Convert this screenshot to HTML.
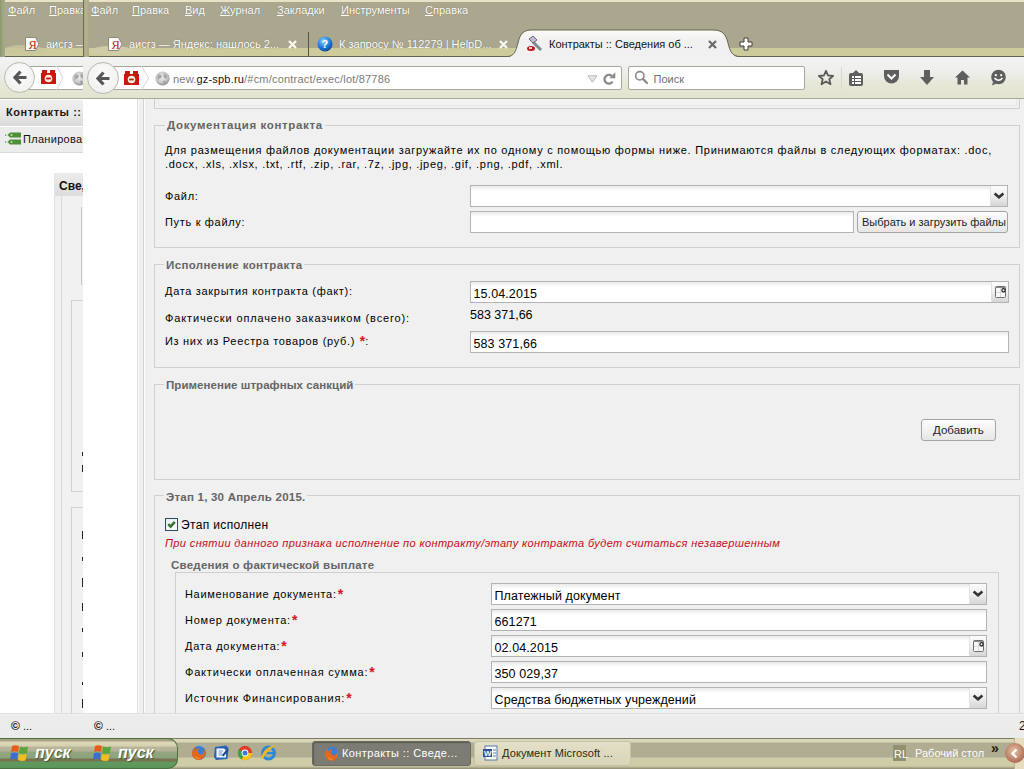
<!DOCTYPE html>
<html><head><meta charset="utf-8">
<style>
*{margin:0;padding:0;box-sizing:border-box}
html,body{width:1024px;height:769px;overflow:hidden;background:#fff;font-family:"Liberation Sans",sans-serif;font-size:11px;color:#000}
.a{position:absolute}
.t{position:absolute;white-space:nowrap;line-height:1}
.m{color:#fff;font-size:11px;text-shadow:0 0 1px rgba(60,60,40,.6)}
.m u{text-decoration:underline}
.lab{position:absolute;white-space:nowrap;font-size:11px;letter-spacing:.68px;line-height:1;color:#000}
.leg{position:absolute;white-space:nowrap;font-size:11.5px;font-weight:bold;letter-spacing:.3px;line-height:1;color:#656565;background:#f0f0f0;padding:0 2px}
.fs{position:absolute;border:1px solid #cfcfcf;background:#f0f0f0}
.inp{position:absolute;height:22px;border:1px solid #b3b3b3;background:linear-gradient(#e9e9e9 0,#f7f7f7 3px,#fff 5px,#fff 100%)}
.inp span{position:absolute;left:2.5px;top:6px;font-size:12.5px;line-height:1;white-space:nowrap;letter-spacing:.1px}
.sel{position:absolute;right:0;top:0;width:17px;height:20px;border-left:1px solid #e2e2e2;background:linear-gradient(#fbfbfb 0,#f1f1f1 45%,#d6d6d6 100%)}
.btn{position:absolute;height:22px;border:1px solid #a4a4a4;border-radius:3px;background:linear-gradient(#fdfdfd,#e6e6e6);text-align:center;white-space:nowrap}
.req{color:#d8141c;font-weight:bold;font-size:14px;line-height:0;position:relative;top:1px;margin-left:1px;letter-spacing:0}
</style></head><body>


<!-- ============ TOP CHROME ============ -->
<div class="a" style="left:0;top:0;width:1024px;height:58px;background:#aba78e"></div>
<div class="a" style="left:0;top:0;width:1024px;height:2px;background:#e7e1c6"></div>
<!-- tab strip bottom band -->
<div class="a" style="left:0;top:48px;width:1024px;height:9px;background:#cdca9c"></div>
<div class="a" style="left:0;top:56px;width:1024px;height:1px;background:#66644f"></div>
<!-- persona blobs -->
<div class="a" style="left:4px;top:45px;width:40px;height:10px;border-radius:50%;background:#c9c69e;opacity:.8"></div>
<div class="a" style="left:88px;top:45px;width:40px;height:10px;border-radius:50%;background:#c9c69e;opacity:.8"></div>
<!-- back window left edge stripe -->
<div class="a" style="left:0;top:0;width:5px;height:57px;background:linear-gradient(90deg,#87986a,#9aa47c 40%,#aba78e)"></div>

<!-- back window menu -->
<div class="t m" style="left:8px;top:5px"><u>Ф</u>айл</div>
<div class="t m" style="left:49px;top:5px"><u>П</u>равка</div>
<!-- back window tab -->
<svg class="a" style="left:25px;top:37px" width="15" height="14" viewBox="0 0 15 14"><path d="M0.5 0.5 H10.5 L14 7 L10.5 13.5 H0.5 Z" fill="#fbfbfb" stroke="#8a8a7a"/><text x="3.6" y="11.6" font-family="Liberation Serif" font-size="12.5" fill="#b52a1c">Я</text></svg>
<div class="t m" style="left:46px;top:39px">аисгз —</div>

<!-- front window -->
<div class="a" style="left:83px;top:0;width:941px;height:58px;background:#aba78e"></div>
<div class="a" style="left:83px;top:0;width:941px;height:2px;background:#e7e1c6"></div>
<div class="a" style="left:83px;top:48px;width:941px;height:8px;background:#cdca9c"></div>
<div class="a" style="left:83px;top:56px;width:941px;height:1px;background:#66644f"></div>
<div class="a" style="left:90px;top:46px;width:44px;height:10px;border-radius:50%;background:#cfcca6"></div>
<div class="a" style="left:83px;top:0;width:6px;height:57px;background:linear-gradient(90deg,#6e6b52 0,#6e6b52 1px,#a9ab82 1px,#b3b48c 3px,#aba78e 6px)"></div>

<div class="t m" style="left:91px;top:5px"><u>Ф</u>айл</div>
<div class="t m" style="left:132px;top:5px"><u>П</u>равка</div>
<div class="t m" style="left:185px;top:5px"><u>В</u>ид</div>
<div class="t m" style="left:220px;top:5px"><u>Ж</u>урнал</div>
<div class="t m" style="left:277px;top:5px"><u>З</u>акладки</div>
<div class="t m" style="left:341px;top:5px"><u>И</u>нструменты</div>
<div class="t m" style="left:425px;top:5px"><u>С</u>правка</div>

<!-- tab 1 -->
<svg class="a" style="left:108px;top:37px" width="15" height="14" viewBox="0 0 15 14"><path d="M0.5 0.5 H10.5 L14 7 L10.5 13.5 H0.5 Z" fill="#fbfbfb" stroke="#8a8a7a"/><text x="3.6" y="11.6" font-family="Liberation Serif" font-size="12.5" fill="#b52a1c">Я</text></svg>
<div class="t m" style="left:129px;top:39px">аисгз — Яндекс: нашлось 2...</div>
<svg class="a" style="left:288px;top:40px" width="9" height="9" viewBox="0 0 9 9"><path d="M1 1 L8 8 M8 1 L1 8" stroke="#fafaf0" stroke-width="2.2"/></svg>
<div class="a" style="left:308px;top:32px;width:1px;height:24px;background:#55533f"></div>
<!-- tab 2 -->
<svg class="a" style="left:317px;top:36px" width="16" height="16" viewBox="0 0 16 16"><defs><radialGradient id="qg" cx="40%" cy="30%" r="70%"><stop offset="0" stop-color="#8fd0ff"/><stop offset=".6" stop-color="#1f7fd8"/><stop offset="1" stop-color="#0b4e9a"/></radialGradient></defs><circle cx="8" cy="8" r="7.5" fill="url(#qg)"/><text x="4.6" y="12.2" font-family="Liberation Sans" font-weight="bold" font-size="11" fill="#fff">?</text></svg>
<div class="t m" style="left:339px;top:39px">К запросу № 112279 | HelpD...</div>
<svg class="a" style="left:499px;top:40px" width="9" height="9" viewBox="0 0 9 9"><path d="M1 1 L8 8 M8 1 L1 8" stroke="#fafaf0" stroke-width="2.2"/></svg>
<!-- active tab -->
<svg class="a" style="left:500px;top:29px" width="250" height="29" viewBox="0 0 250 29"><defs><linearGradient id="tg" x1="0" y1="0" x2="0" y2="1"><stop offset="0" stop-color="#fbfbf8"/><stop offset=".35" stop-color="#f1f1f1"/><stop offset="1" stop-color="#f0f0f0"/></linearGradient></defs><path d="M0 28 H7 C14 28 16 22 18 14 C20 5 23 1 32 1 H213 C222 1 226 5 228 14 C230 22 232 28 240 28 H250 V29 H0 Z" fill="url(#tg)"/><path d="M0 27.5 H7 C14 27.5 16 22 18 14 C20 5 23 1 32 1 H213 C222 1 226 5 228 14 C230 22 232 27.5 240 27.5 H250" fill="none" stroke="#66644f" stroke-width="1"/></svg>
<svg class="a" style="left:526px;top:35px" width="18" height="18" viewBox="0 0 18 18"><path d="M7 7 L15 15" stroke="#7f8c8d" stroke-width="3"/><path d="M3 4 L7 1 L11 5 L7 8 Z" fill="#c9b7cf" stroke="#6b6b78" stroke-width="1"/><ellipse cx="5" cy="13.5" rx="4" ry="2.5" fill="#c4171d"/><rect x="3" y="12" width="3" height="2" fill="#f6d2d2"/></svg>
<div class="t" style="left:549px;top:39px;font-size:11px;color:#111">Контракты :: Сведения об ...</div>
<svg class="a" style="left:708px;top:40px" width="9" height="9" viewBox="0 0 9 9"><path d="M1 1 L8 8 M8 1 L1 8" stroke="#6a6a6a" stroke-width="2.2"/></svg>
<svg class="a" style="left:739px;top:37px" width="14" height="14" viewBox="0 0 14 14"><path d="M5 1 H9 V5 H13 V9 H9 V13 H5 V9 H1 V5 H5 Z" fill="#fff" stroke="#3f3f35" stroke-width="1"/></svg>

<!-- ============ NAV BAR ============ -->
<div class="a" style="left:0;top:57px;width:1024px;height:42px;background:linear-gradient(#f3f3f3 0,#efefed 30%,#e5e6d4 70%,#e2e3cf 100%)"></div>
<div class="a" style="left:0;top:98px;width:1024px;height:1px;background:#a9a996"></div>
<!-- back window nav -->
<div class="a" style="left:20px;top:66px;width:70px;height:24px;border:1px solid #a7a7a0;border-radius:0 2px 2px 0;background:#fff"></div>
<div class="a" style="left:4px;top:62px;width:31px;height:31px;border-radius:50%;border:1px solid #b9b9b2;background:radial-gradient(circle at 50% 40%,#fdfdfd,#ececea)"></div>
<svg class="a" style="left:13px;top:70px" width="14" height="15" viewBox="0 0 14 15"><path d="M7.5 1.5 L2 7.5 L7.5 13.5 M2.5 7.5 H13.5" fill="none" stroke="#585858" stroke-width="3.2"/></svg>
<svg class="a" style="left:41px;top:70px" width="15" height="14" viewBox="0 0 15 14"><rect x="0" y="3" width="15" height="11" fill="#c8180f"/><rect x="1" y="0" width="5" height="4" fill="#c8180f"/><rect x="9" y="0" width="5" height="4" fill="#c8180f"/><circle cx="7.5" cy="8.5" r="3.8" fill="#fbeede"/><rect x="5.2" y="7.6" width="4.6" height="1.8" fill="#c8180f"/></svg>
<svg class="a" style="left:56px;top:66px" width="8" height="24" viewBox="0 0 8 24"><path d="M0.5 0 L7 12 L0.5 24" fill="none" stroke="#cfd6dd" stroke-width="1"/></svg>
<svg class="a" style="left:72px;top:71px" width="15" height="15" viewBox="0 0 15 15"><defs><radialGradient id="gl2" cx="45%" cy="40%" r="60%"><stop offset="0" stop-color="#f4f4f4"/><stop offset=".7" stop-color="#c2c2c2"/><stop offset="1" stop-color="#8e8e8e"/></radialGradient></defs><circle cx="7.5" cy="7.5" r="7" fill="url(#gl2)"/><path d="M3 4 C5 3 7 4 7 6 C6 8 4 7 3.5 9 C2.5 8 2 6 3 4 Z M9 2.5 C11 3 12.5 5 12 7 C11 8 10 6.5 9 7 C8.5 5.5 8 4 9 2.5 Z M8 10 C10 9.5 11.5 10.5 10.5 12.5 C9 13 8 12 8 10 Z" fill="#9a9a9a" opacity=".8"/></svg>
<!-- front window nav -->
<div class="a" style="left:83px;top:57px;width:941px;height:42px;background:linear-gradient(#f3f3f3 0,#efefed 30%,#e5e6d4 70%,#e2e3cf 100%)"></div>
<div class="a" style="left:83px;top:98px;width:941px;height:1px;background:#a9a996"></div>
<div class="a" style="left:103px;top:66px;width:519px;height:24px;border:1px solid #a7a7a0;border-radius:0 2px 2px 0;background:#fff"></div>
<div class="a" style="left:87px;top:62px;width:32px;height:32px;border-radius:50%;border:1px solid #b9b9b2;background:radial-gradient(circle at 50% 40%,#fdfdfd,#ececea)"></div>
<svg class="a" style="left:96px;top:71px" width="14" height="15" viewBox="0 0 14 15"><path d="M7.5 1.5 L2 7.5 L7.5 13.5 M2.5 7.5 H13.5" fill="none" stroke="#585858" stroke-width="3.2"/></svg>
<svg class="a" style="left:124px;top:71px" width="15" height="14" viewBox="0 0 15 14"><rect x="0" y="3" width="15" height="11" fill="#c8180f"/><rect x="1" y="0" width="5" height="4" fill="#c8180f"/><rect x="9" y="0" width="5" height="4" fill="#c8180f"/><circle cx="7.5" cy="8.5" r="3.8" fill="#fbeede"/><rect x="5.2" y="7.6" width="4.6" height="1.8" fill="#c8180f"/></svg>
<svg class="a" style="left:141px;top:66px" width="9" height="24" viewBox="0 0 9 24"><path d="M0.5 0 L7.5 12 L0.5 24" fill="none" stroke="#cfd6dd" stroke-width="1"/></svg>
<svg class="a" style="left:155px;top:71px" width="15" height="15" viewBox="0 0 15 15"><defs><radialGradient id="gl1" cx="45%" cy="40%" r="60%"><stop offset="0" stop-color="#f4f4f4"/><stop offset=".7" stop-color="#c2c2c2"/><stop offset="1" stop-color="#8e8e8e"/></radialGradient></defs><circle cx="7.5" cy="7.5" r="7" fill="url(#gl1)"/><path d="M3 4 C5 3 7 4 7 6 C6 8 4 7 3.5 9 C2.5 8 2 6 3 4 Z M9 2.5 C11 3 12.5 5 12 7 C11 8 10 6.5 9 7 C8.5 5.5 8 4 9 2.5 Z M8 10 C10 9.5 11.5 10.5 10.5 12.5 C9 13 8 12 8 10 Z" fill="#9a9a9a" opacity=".8"/></svg>
<div class="t" style="left:173px;top:74px;font-size:11px;letter-spacing:.2px;color:#7a7a7a">new.<span style="color:#111">gz-spb.ru</span>/#cm/contract/exec/lot/87786</div>
<svg class="a" style="left:587px;top:75px" width="11" height="8" viewBox="0 0 11 8"><path d="M1 0.8 H10 L5.5 7.2 Z" fill="#e6e6e6" stroke="#b8b8b8"/></svg>
<svg class="a" style="left:601px;top:71px" width="16" height="15" viewBox="0 0 16 15"><path d="M10.9 5 A4.4 4.4 0 1 0 11.6 10.6" fill="none" stroke="#8a8a8a" stroke-width="2.3"/><path d="M14.3 1.2 L14.3 7.2 L8.4 7.2 Z" fill="#8a8a8a"/></svg>
<div class="a" style="left:628px;top:66px;width:177px;height:24px;border:1px solid #a7a7a0;border-radius:2px;background:#fff"></div>
<svg class="a" style="left:634px;top:70px" width="15" height="15" viewBox="0 0 15 15"><circle cx="5.8" cy="5.8" r="4.2" fill="none" stroke="#8a8a8a" stroke-width="1.6"/><path d="M8.8 8.8 L13 13" stroke="#8a8a8a" stroke-width="2.2" stroke-linecap="round"/></svg>
<div class="t" style="left:653.5px;top:74px;font-size:11px;color:#707070">Поиск</div>
<!-- toolbar icons -->
<svg class="a" style="left:817px;top:69px" width="18" height="18" viewBox="0 0 18 18"><path d="M9 1.8 L11.1 6.5 L16.2 6.9 L12.3 10.2 L13.5 15.2 L9 12.5 L4.5 15.2 L5.7 10.2 L1.8 6.9 L6.9 6.5 Z" fill="none" stroke="#5a5a5a" stroke-width="1.8" stroke-linejoin="round"/></svg>
<div class="a" style="left:841px;top:67px;width:1px;height:22px;background:#d8d8cc"></div>
<svg class="a" style="left:848px;top:69px" width="16" height="18" viewBox="0 0 16 18"><rect x="1" y="4" width="14" height="13" rx="2" fill="#5e5e5e"/><path d="M5 4 L8 1 L11 4 Z" fill="#5e5e5e"/><rect x="4" y="7" width="2" height="2" fill="#fff"/><rect x="7" y="7" width="6" height="2" fill="#fff"/><rect x="4" y="10" width="2" height="2" fill="#fff"/><rect x="7" y="10" width="6" height="2" fill="#fff"/><rect x="4" y="13" width="2" height="2" fill="#fff"/><rect x="7" y="13" width="6" height="2" fill="#fff"/></svg>
<svg class="a" style="left:883px;top:69px" width="17" height="16" viewBox="0 0 17 16"><path d="M1 1 H16 V7 A7.5 7.5 0 0 1 1 7 Z" fill="#5e5e5e"/><path d="M4.5 5.5 L8.5 9.5 L12.5 5.5" fill="none" stroke="#fff" stroke-width="2"/></svg>
<svg class="a" style="left:919px;top:69px" width="16" height="17" viewBox="0 0 16 17"><rect x="5" y="1" width="6" height="8" fill="#5e5e5e"/><path d="M1 8 H15 L8 16 Z" fill="#5e5e5e"/></svg>
<svg class="a" style="left:954px;top:69px" width="17" height="17" viewBox="0 0 17 17"><path d="M8.5 1.5 L16 8.5 H13.5 V15.5 H10 V11 H7 V15.5 H3.5 V8.5 H1 Z" fill="#5e5e5e"/></svg>
<svg class="a" style="left:990px;top:69px" width="17" height="17" viewBox="0 0 17 17"><circle cx="8.5" cy="8" r="7.3" fill="#5e5e5e"/><path d="M3 13 L2 16.5 L6.5 14.5 Z" fill="#5e5e5e"/><circle cx="5.8" cy="6.2" r="1.1" fill="#fff"/><circle cx="11.2" cy="6.2" r="1.1" fill="#fff"/><path d="M4.5 9 Q8.5 13.5 12.5 9" fill="none" stroke="#fff" stroke-width="1.6"/></svg>


<!-- ============ BACK WINDOW CONTENT ============ -->
<div class="a" style="left:0;top:99px;width:83px;height:614px;background:#fff"></div>
<div class="a" style="left:0;top:100px;width:83px;height:26px;background:linear-gradient(#efefef,#e6e6e6 60%,#dadada)"></div>
<div class="t" style="left:6px;top:107px;font-size:11px;font-weight:bold;letter-spacing:.55px;color:#1a1a1a">Контракты ::</div>
<div class="a" style="left:0;top:127px;width:83px;height:26px;background:#ececec;border-bottom:1px solid #dcdcdc"></div>
<svg class="a" style="left:4px;top:131px" width="18" height="16" viewBox="0 0 18 16"><path d="M6 1.5 H17 V6.5 H6 L3.5 4 Z" fill="#4f8f38"/><path d="M6 8.5 H17 V13.5 H6 L3.5 11 Z" fill="#4f8f38"/><circle cx="7.5" cy="4" r="1" fill="#bfe3a8"/><circle cx="7.5" cy="11" r="1" fill="#bfe3a8"/><rect x="1" y="3.5" width="1.3" height="1.3" fill="#5a86a8"/><rect x="1" y="10.5" width="1.3" height="1.3" fill="#5a86a8"/></svg>
<div class="t" style="left:23px;top:134px;font-size:11px;letter-spacing:.3px;color:#111">Планирован</div>
<div class="a" style="left:54px;top:173px;width:29px;height:540px;background:#f1f1f1;border-left:1px solid #e2e2e2"></div>
<div class="a" style="left:54px;top:173px;width:29px;height:23px;background:linear-gradient(#ececec,#dcdcdc);border-left:1px solid #e6e6e6"></div>
<div class="t" style="left:59px;top:180px;font-size:12px;font-weight:bold;color:#111">Све,</div>
<div class="a" style="left:61px;top:196px;width:1px;height:517px;background:#dadada"></div>
<div class="a" style="left:81px;top:207px;width:1px;height:78px;background:#c8c8c8"></div>
<div class="a" style="left:71px;top:300px;width:12px;height:192px;border:1px solid #d0d0d0;border-right:0"></div>
<div class="a" style="left:71px;top:507px;width:12px;height:220px;border:1px solid #d0d0d0;border-right:0"></div>
<div class="a" style="left:82px;top:452px;width:1px;height:4px;background:#222"></div>
<div class="a" style="left:82px;top:465px;width:1px;height:7px;background:#222"></div>
<div class="a" style="left:82px;top:531px;width:1px;height:8px;background:#222"></div>
<div class="a" style="left:82px;top:557px;width:1px;height:4px;background:#222"></div>
<div class="a" style="left:82px;top:578px;width:1px;height:9px;background:#222"></div>
<div class="a" style="left:82px;top:603px;width:1px;height:8px;background:#222"></div>
<div class="a" style="left:82px;top:628px;width:1px;height:4px;background:#222"></div>
<div class="a" style="left:82px;top:652px;width:1px;height:5px;background:#222"></div>
<div class="a" style="left:82px;top:682px;width:1px;height:3px;background:#222"></div>
<div class="a" style="left:82px;top:699px;width:1px;height:9px;background:#222"></div>

<!-- ============ CONTENT ============ -->
<div class="a" style="left:83px;top:99px;width:941px;height:614px;background:#f0f0f0"></div>
<div class="a" style="left:83px;top:99px;width:54px;height:614px;background:#fff"></div>
<div class="a" style="left:137px;top:99px;width:1px;height:614px;background:#e0e0e0"></div>
<div class="a" style="left:138px;top:99px;width:1px;height:614px;background:#fafafa"></div>
<div class="a" style="left:143px;top:99px;width:1px;height:614px;background:#d4d4d4"></div>
<div class="a" style="left:144px;top:99px;width:1px;height:614px;background:#fcfcfc"></div>

<!-- previous fieldset (cut) -->
<div class="fs" style="left:154px;top:99px;width:866px;height:10px;border-top:0"></div>
<div class="a" style="left:158px;top:99px;width:859px;height:7px;border:1px solid #e8e8e8;border-top:0;background:#f3f3f3"></div>

<!-- Документация контракта -->
<div class="fs" style="left:154px;top:125px;width:866px;height:123px"></div>
<div class="leg" style="left:165px;top:120px;letter-spacing:0.64px">Документация контракта</div>
<div class="lab" style="left:165px;top:144.7px;letter-spacing:.728px">Для размещения файлов документации загружайте их по одному с помощью формы ниже. Принимаются файлы в следующих форматах: .doc,</div>
<div class="lab" style="left:165px;top:158.7px;letter-spacing:.70px">.docx, .xls, .xlsx, .txt, .rtf, .zip, .rar, .7z, .jpg, .jpeg, .gif, .png, .pdf, .xml.</div>
<div class="lab" style="left:165px;top:190.7px">Файл:</div>
<div class="lab" style="left:165px;top:216.8px">Путь к файлу:</div>
<div class="inp" style="left:470px;top:185px;width:538px"><div class="sel"><svg width="17" height="20" viewBox="0 0 17 20"><path d="M3.6 7.4 L8 11.2 L12.4 7.4" fill="none" stroke="#333" stroke-width="2.6"/></svg></div></div>
<div class="inp" style="left:470px;top:211px;width:384px"></div>
<div class="btn" style="left:857px;top:211px;width:151px"><span class="t" style="left:4px;top:5px;font-size:11px;color:#222">Выбрать и загрузить файлы</span></div>

<!-- Исполнение контракта -->
<div class="fs" style="left:154px;top:264px;width:866px;height:104px"></div>
<div class="leg" style="left:164px;top:259.6px;letter-spacing:0.37px">Исполнение контракта</div>
<div class="lab" style="left:165px;top:286.4px">Дата закрытия контракта (факт):</div>
<div class="lab" style="left:165px;top:312.6px;letter-spacing:.86px">Фактически оплачено заказчиком (всего):</div>
<div class="lab" style="left:165px;top:336.2px">Из них из Реестра товаров (руб.) <span class="req">*</span>:</div>
<div class="inp" style="left:470px;top:281px;width:539px"><span>15.04.2015</span><div class="sel"><svg width="17" height="20" viewBox="0 0 17 20"><rect x="3.5" y="4.5" width="10" height="11" rx="1" fill="#f8f8f8" stroke="#6e6e6e" stroke-width="1"/><line x1="3.5" y1="5.5" x2="13.5" y2="5.5" stroke="#8a8a8a"/><line x1="4" y1="10.5" x2="13" y2="10.5" stroke="#dadada"/><line x1="8.5" y1="6" x2="8.5" y2="15" stroke="#dadada"/><circle cx="11.5" cy="8.3" r="1.6" fill="#fff" stroke="#222" stroke-width="1.2"/></svg></div></div>
<div class="t" style="left:470px;top:309.1px;font-size:12.5px">583 371,66</div>
<div class="inp" style="left:470px;top:331px;width:539px"><span>583 371,66</span></div>

<!-- Применение штрафных санкций -->
<div class="fs" style="left:154px;top:384px;width:866px;height:96px"></div>
<div class="leg" style="left:164px;top:379.8px;letter-spacing:0.05px">Применение штрафных санкций</div>
<div class="btn" style="left:921px;top:419px;width:75px"><span class="t" style="left:11px;top:5px;font-size:11.5px;color:#222">Добавить</span></div>

<!-- Этап 1 -->
<div class="fs" style="left:154px;top:495px;width:866px;height:260px"></div>
<div class="leg" style="left:164px;top:491.7px;letter-spacing:0.23px">Этап 1, 30 Апрель 2015.</div>
<div class="a" style="left:165px;top:518px;width:13px;height:13px;border:1px solid #2b4b5c;background:linear-gradient(135deg,#e4eef0,#fff)"><svg width="11" height="11" viewBox="0 0 11 11" style="position:absolute;left:0;top:0"><path d="M2.3 5.2 L4.6 7.6 L8.8 2.8" fill="none" stroke="#3b7534" stroke-width="2.6"/></svg></div>
<div class="lab" style="left:181px;top:518.6px;font-size:12px;letter-spacing:.35px">Этап исполнен</div>
<div class="lab" style="left:165px;top:538px;font-style:italic;color:#c80a16;letter-spacing:.38px">При снятии данного признака исполнение по контракту/этапу контракта будет считаться незавершенным</div>
<div class="leg" style="left:169px;top:560.4px;background:none;letter-spacing:0.24px">Сведения о фактической выплате</div>
<div class="a" style="left:175px;top:572px;width:824px;height:200px;border:1px solid #cfcfcf;border-bottom:0"></div>
<div class="lab" style="left:185px;top:589.2px">Наименование документа:<span class="req">*</span></div>
<div class="lab" style="left:185px;top:615.2px;letter-spacing:0.770px">Номер документа:<span class="req">*</span></div>
<div class="lab" style="left:185px;top:641.2px;letter-spacing:0.750px">Дата документа:<span class="req">*</span></div>
<div class="lab" style="left:185px;top:667.2px;letter-spacing:0.810px">Фактически оплаченная сумма:<span class="req">*</span></div>
<div class="lab" style="left:185px;top:693.2px;letter-spacing:0.855px">Источник Финансирования:<span class="req">*</span></div>
<div class="inp" style="left:491px;top:583px;width:496px"><span>Платежный документ</span><div class="sel"><svg width="17" height="20" viewBox="0 0 17 20"><path d="M3.6 7.4 L8 11.2 L12.4 7.4" fill="none" stroke="#333" stroke-width="2.6"/></svg></div></div>
<div class="inp" style="left:491px;top:609px;width:496px"><span>661271</span></div>
<div class="inp" style="left:491px;top:635px;width:496px"><span>02.04.2015</span><div class="sel"><svg width="17" height="20" viewBox="0 0 17 20"><rect x="3.5" y="4.5" width="10" height="11" rx="1" fill="#f8f8f8" stroke="#6e6e6e" stroke-width="1"/><line x1="3.5" y1="5.5" x2="13.5" y2="5.5" stroke="#8a8a8a"/><line x1="4" y1="10.5" x2="13" y2="10.5" stroke="#dadada"/><line x1="8.5" y1="6" x2="8.5" y2="15" stroke="#dadada"/><circle cx="11.5" cy="8.3" r="1.6" fill="#fff" stroke="#222" stroke-width="1.2"/></svg></div></div>
<div class="inp" style="left:491px;top:661px;width:496px"><span>350 029,37</span></div>
<div class="inp" style="left:491px;top:687px;width:496px"><span>Средства бюджетных учреждений</span><div class="sel"><svg width="17" height="20" viewBox="0 0 17 20"><path d="M3.6 7.4 L8 11.2 L12.4 7.4" fill="none" stroke="#333" stroke-width="2.6"/></svg></div></div>


<!-- ============ STATUS BAR ============ -->
<div class="a" style="left:0;top:713px;width:1024px;height:25px;background:linear-gradient(#f6f6f6 0,#ececec 3px,#ebebeb 100%)"></div>
<div class="a" style="left:0;top:713px;width:1024px;height:1px;background:#dedede"></div>
<div class="t" style="left:11px;top:720px;font-size:11px;color:#111"><span style="font-size:12px;font-weight:bold">©</span> ...</div>
<div class="t" style="left:94px;top:720px;font-size:11px;color:#111"><span style="font-size:12px;font-weight:bold">©</span> ...</div>
<div class="t" style="left:1019px;top:720px;font-size:12px;color:#111">2</div>

<!-- ============ TASKBAR ============ -->
<div class="a" style="left:0;top:738px;width:1024px;height:31px;background:linear-gradient(#7e7b63 0,#7e7b63 1px,#dcd8bc 1px,#d9d5b8 4px,#b1ad93 5px,#b0ac92 19px,#cfcca8 20px,#cfcca8 28px,#b9b596 29px,#8d8a70 31px)"></div>
<!-- start button -->
<div class="a" style="left:-20px;top:738px;width:198px;height:31px;border-radius:0 10px 10px 0;border:1px solid #4c7040;border-left:0;background:linear-gradient(#a4a180 0,#a9a585 2px,#dcd7b8 3px,#d6d1b1 7px,#b9b69b 8px,#b3b196 12px,#92a67f 13px,#8aa37a 19px,#7a7352 20px,#78714f 22px,#62995d 23px,#5d975a 28px,#447a40 31px)"></div>
<svg class="a" style="left:10px;top:743px" width="20" height="20" viewBox="0 0 20 20"><path d="M2 3 Q5 1.5 9 3 L8 9 Q5 7.5 1 9 Z" fill="#e85c1a"/><path d="M10 3.5 Q14 5 18 3.5 L17 10 Q13 11.5 9 10 Z" fill="#5ca53a"/><path d="M1 10 Q4.5 8.8 8 10.3 L7 16.5 Q4 15 0 16.5 Z" fill="#3a6fd0"/><path d="M9 11 Q12.5 12.2 16.5 11 L15.5 17.5 Q12 18.5 8 17 Z" fill="#f0c020"/></svg>
<div class="t" style="left:35px;top:745px;font-size:16px;font-weight:bold;font-style:italic;color:#fff;text-shadow:1px 1px 1px #3d5a36">пуск</div>
<svg class="a" style="left:93px;top:743px" width="20" height="20" viewBox="0 0 20 20"><path d="M2 3 Q5 1.5 9 3 L8 9 Q5 7.5 1 9 Z" fill="#e85c1a"/><path d="M10 3.5 Q14 5 18 3.5 L17 10 Q13 11.5 9 10 Z" fill="#5ca53a"/><path d="M1 10 Q4.5 8.8 8 10.3 L7 16.5 Q4 15 0 16.5 Z" fill="#3a6fd0"/><path d="M9 11 Q12.5 12.2 16.5 11 L15.5 17.5 Q12 18.5 8 17 Z" fill="#f0c020"/></svg>
<div class="t" style="left:118px;top:745px;font-size:16px;font-weight:bold;font-style:italic;color:#fff;text-shadow:1px 1px 1px #3d5a36">пуск</div>
<!-- quick launch -->
<svg class="a" style="left:191px;top:745px" width="16" height="16" viewBox="0 0 16 16"><circle cx="8" cy="8" r="7" fill="#3b7fd2"/><path d="M13.6 4.2 C15.6 8.2 14 13.6 8.5 15 C3.6 15.6 0.6 11.6 1 7.6 C1.3 5 2.8 3 4 2.4 C3.6 4 3.9 5 4.6 5.6 C5.2 4.1 6.6 3 8.2 3.4 C6.6 5 6.5 7.2 8 8.6 C10 10.6 13 9.2 13.6 4.2 Z" fill="#e4671b"/><path d="M3.2 11 C4.5 13.5 7 14.3 9.5 14 C7 13 5 12 3.2 11 Z" fill="#f39a2a"/></svg>
<svg class="a" style="left:213px;top:744px" width="17" height="17" viewBox="0 0 17 17"><path d="M2 3 L13 1.5 L15.5 4 L14.5 15 L3 16 L1 13 Z" fill="#2a62b0"/><path d="M3.5 4.5 H11 L13 6.5 V13.5 H3.5 Z" fill="#f4f8ff"/><path d="M5.5 7 H10 M5.5 9 H9 M5.5 11 H10" stroke="#6a8fc8" stroke-width="1"/><path d="M9 11 L14 5 L15.5 6.5 L10.5 12.5 Z" fill="#1d4a8a"/></svg>
<svg class="a" style="left:237px;top:745px" width="16" height="16" viewBox="0 0 16 16"><circle cx="8" cy="8" r="7.2" fill="#dc3e2e"/><path d="M8 8 L15.2 8 A7.2 7.2 0 0 1 4.4 14.2 Z" fill="#f3c419"/><path d="M8 8 L4.4 14.2 A7.2 7.2 0 0 1 1.8 4.4 Z" fill="#3ba346"/><circle cx="8" cy="8" r="3.4" fill="#fff"/><circle cx="8" cy="8" r="2.5" fill="#3b78d8"/></svg>
<svg class="a" style="left:260px;top:744px" width="17" height="17" viewBox="0 0 17 17"><circle cx="8.5" cy="9" r="6" fill="none" stroke="#2a8ad8" stroke-width="3"/><rect x="3" y="8" width="11" height="2.2" fill="#2a8ad8"/><path d="M1 14 C3 6 10 1 16 2 C13 3 7 7 3 15 Z" fill="#f2b51e"/></svg>
<!-- task buttons -->
<div class="a" style="left:312px;top:741px;width:159px;height:25px;border-radius:3px;background:#7c7c74;border:1px solid #6a6a60;box-shadow:inset 1px 1px 1px #5a5a52"></div>
<svg class="a" style="left:324px;top:746px" width="16" height="16" viewBox="0 0 16 16"><circle cx="8" cy="8" r="7" fill="#3b7fd2"/><path d="M13.6 4.2 C15.6 8.2 14 13.6 8.5 15 C3.6 15.6 0.6 11.6 1 7.6 C1.3 5 2.8 3 4 2.4 C3.6 4 3.9 5 4.6 5.6 C5.2 4.1 6.6 3 8.2 3.4 C6.6 5 6.5 7.2 8 8.6 C10 10.6 13 9.2 13.6 4.2 Z" fill="#e4671b"/><path d="M3.2 11 C4.5 13.5 7 14.3 9.5 14 C7 13 5 12 3.2 11 Z" fill="#f39a2a"/></svg>
<div class="t" style="left:342px;top:748px;font-size:11px;letter-spacing:.4px;color:#fff">Контракты :: Сведе...</div>
<div class="a" style="left:474px;top:741px;width:157px;height:25px;border-radius:3px;background:linear-gradient(#e4e0c8,#d8d4b8);border:1px solid #c6c2a6"></div>
<svg class="a" style="left:482px;top:745px" width="16" height="16" viewBox="0 0 16 16"><rect x="3" y="1" width="12" height="14" fill="#fff" stroke="#5577aa"/><rect x="1" y="4" width="9" height="8" fill="#2b5597"/><text x="2" y="11" font-family="Liberation Sans" font-weight="bold" font-size="8" fill="#fff">W</text><line x1="11" y1="5" x2="14" y2="5" stroke="#5577aa"/><line x1="11" y1="8" x2="14" y2="8" stroke="#5577aa"/><line x1="11" y1="11" x2="14" y2="11" stroke="#5577aa"/></svg>
<div class="t" style="left:502px;top:748px;font-size:11px;letter-spacing:.1px;color:#1f2a14">Документ Microsoft ...</div>
<!-- tray -->
<div class="a" style="left:893px;top:745px;width:13px;height:16px;background:#8f916f"></div>
<div class="t" style="left:894px;top:749px;font-size:11px;color:#fff">RL</div>
<div class="t" style="left:915px;top:748px;font-size:11px;color:#fff">Рабочий стол</div>
<div class="t" style="left:991px;top:741px;font-size:14px;font-weight:bold;color:#1e1e10">»</div>
<div class="a" style="left:1014px;top:738px;width:10px;height:31px;background:#e8dcc0;border-left:1px solid #bdb48a"></div>
<div class="a" style="left:1005px;top:743px;width:20px;height:20px;border-radius:50%;background:radial-gradient(circle at 45% 40%,#e6c2a6,#b87a62 60%,#8e4b3a)"></div>
<svg class="a" style="left:1009px;top:748px" width="11" height="11" viewBox="0 0 11 11"><path d="M7.5 1.5 L3.5 5.5 L7.5 9.5" fill="none" stroke="#fff" stroke-width="2.4"/></svg>

</body></html>
